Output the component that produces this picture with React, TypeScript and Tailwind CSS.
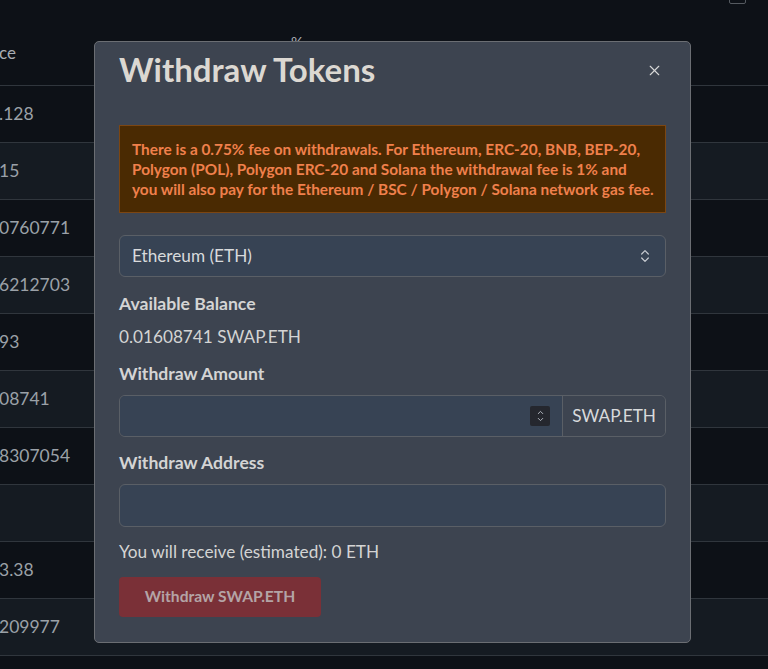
import { ChevronDown, ChevronUp, ChevronsUpDown, X } from "lucide-react";

const rows = [".128", "15", "0760771", "6212703", "93", "08741", "8307054", "", "3.38", "209977"];

function Spinner() {
  return (
    <div className="flex flex-col items-center justify-center w-[20px] h-[20px] bg-[#25272e] rounded-[2px] text-[#b8bcc4]">
      <ChevronUp size={9} strokeWidth={2.5} className="-mb-[1px]" />
      <ChevronDown size={9} strokeWidth={2.5} className="-mt-[1px]" />
    </div>
  );
}

export default function App() {
  const labelClass = "text-[17.6px] leading-[24px] font-bold text-[#d4d4d4]";
  const textClass = "text-[17.2px] leading-[24px] text-[#d4d4d4]";
  const inputClass = "w-full h-[43px] bg-[#374354] border border-[#5a5f66] rounded-[6px]";

  return (
    <div className="relative w-full h-[669px] overflow-hidden bg-[#0d1117] text-[#9ba1a8] font-['Lato',sans-serif]">
      {/* table behind the dialog */}
      <div className="flex flex-col">
        <div className="relative h-[85px] flex items-end pb-[20px] text-[17px] text-[#a8adb3]">
          <span className="-ml-[1px]">ce</span>
          <span className="absolute left-[291px] top-[31px] text-[15px]">%</span>
          <div className="absolute left-[729px] -top-[4px] w-[17px] h-[8px] border border-[#555a60] rounded-[2px]" />
        </div>
        {rows.map((r, i) => (
          <div
            key={i}
            className={`h-[57px] flex items-center border-t border-[#30363d] text-[17.5px] ${
              i % 2 === 0 ? "bg-[#0d1117]" : "bg-[#151b22]"
            }`}
          >
            <span className="-ml-[1px]">{r}</span>
          </div>
        ))}
        <div className="h-[20px] border-t border-[#30363d] bg-[#0d1117]" />
      </div>

      {/* dialog */}
      <div className="absolute left-[94px] top-[41px] w-[597px] bg-[#3d4450] border border-[#6b6e73] rounded-[5px] px-[24px] pt-[9px] pb-[25px]">
        <div className="flex items-center justify-between h-[36px]">
          <h2 className="text-[33px] leading-[36px] font-bold text-[#dcd8d2]">Withdraw Tokens</h2>
          <button className="mr-[3px] mt-[2px] text-[#d8d8d8]">
            <X size={17} strokeWidth={1.6} />
          </button>
        </div>

        <div className="mt-[38px] bg-[#4a2a02] border border-[#7c4612] px-[12px] py-[13px] text-[15.4px] leading-[20px] font-bold text-[#f0804c] whitespace-nowrap">
          There is a 0.75% fee on withdrawals. For Ethereum, ERC-20, BNB, BEP-20,
          <br />
          Polygon (POL), Polygon ERC-20 and Solana the withdrawal fee is 1% and
          <br />
          you will also pay for the Ethereum / BSC / Polygon / Solana network gas fee.
        </div>

        <div className="mt-[22px] flex items-center justify-between h-[42px] bg-[#374354] border border-[#5a5f66] rounded-[6px] pl-[12px] pr-[12px]">
          <span className="text-[17.2px] text-[#d8dadc]">Ethereum (ETH)</span>
          <ChevronsUpDown size={16} strokeWidth={1.8} className="text-[#c8ccd2]" />
        </div>

        <div className={`mt-[15px] ${labelClass}`}>Available Balance</div>
        <div className={`mt-[9px] ${textClass}`}>0.01608741 SWAP.ETH</div>

        <div className={`mt-[13px] ${labelClass}`}>Withdraw Amount</div>
        <div className="mt-[9px] flex h-[42px] border border-[#5a5f66] rounded-[6px] overflow-hidden">
          <div className="flex-1 flex items-center justify-end pr-[12px] bg-[#374354]">
            <Spinner />
          </div>
          <div className="flex items-center px-[9px] border-l border-[#5a5f66] bg-[#3d4450] text-[17.2px] text-[#d8dadc]">
            SWAP.ETH
          </div>
        </div>

        <div className={`mt-[14px] ${labelClass}`}>Withdraw Address</div>
        <div className={`mt-[9px] ${inputClass}`} />

        <div className={`mt-[13px] ${textClass}`}>You will receive (estimated): 0 ETH</div>

        <button className="mt-[13px] h-[40px] w-[202px] bg-[#7a3037] rounded-[4px] text-[15.6px] font-bold text-[#b4a4a6]">
          Withdraw SWAP.ETH
        </button>
      </div>
    </div>
  );
}
